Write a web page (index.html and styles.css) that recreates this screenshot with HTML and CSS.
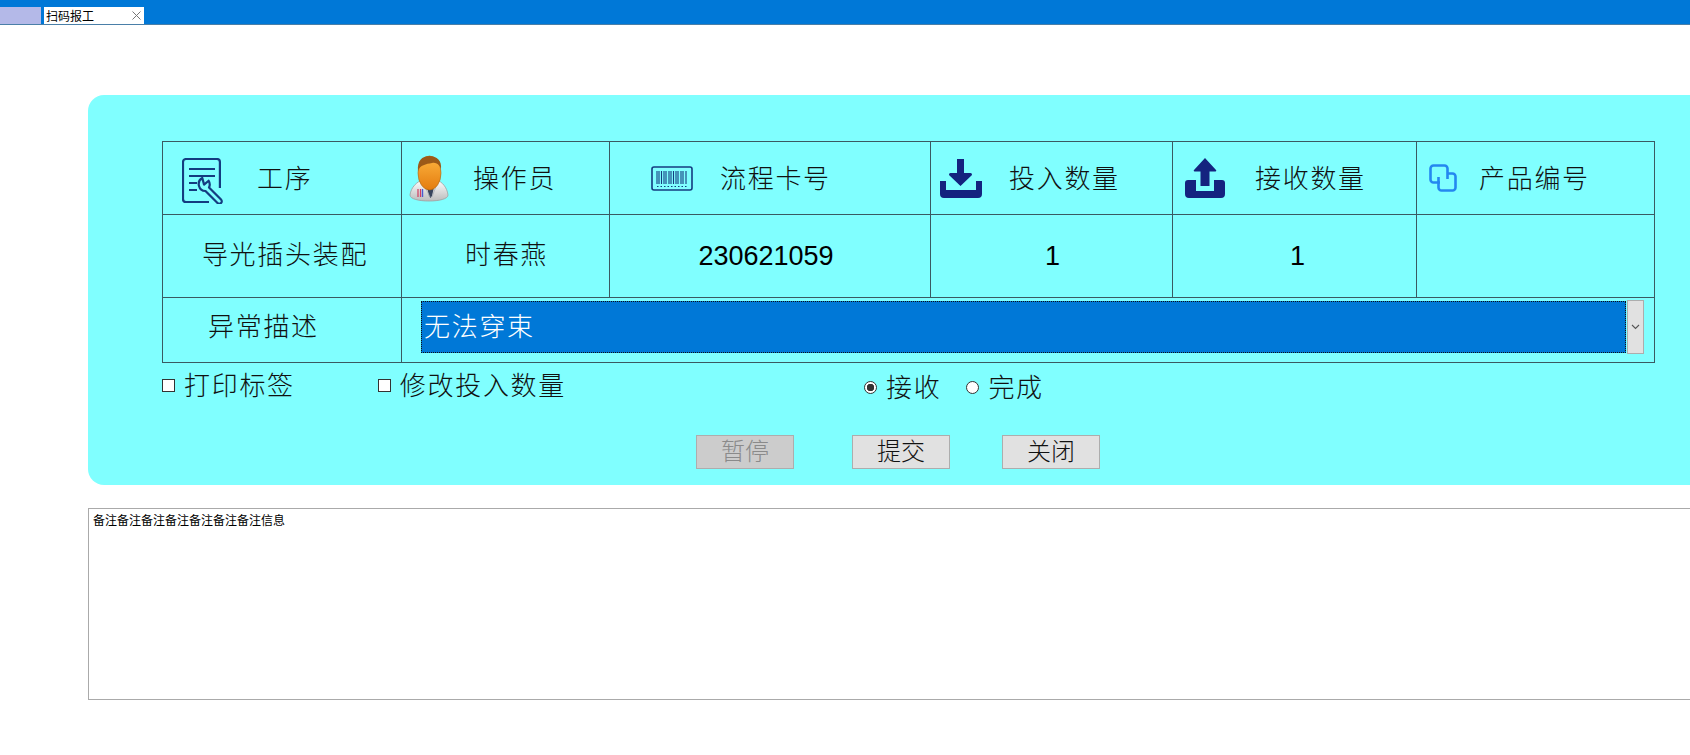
FILE: index.html

```html
<!DOCTYPE html>
<html lang="zh-CN">
<head>
    <meta charset="UTF-8">
    <meta name="viewport" content="width=device-width, initial-scale=1.0">
    <title>扫码报工</title>
    <link rel="stylesheet" href="styles.css">
</head>
<body>
    <div class="tab-bar">
        <div class="tab-home"></div>
        <div class="tab-active">
            <span>扫码报工</span>
            <svg class="tab-close" width="9" height="9" viewBox="0 0 9 9"><path d="M.5 .5l8 8M8.500 .5l-8 8" stroke="#777" stroke-width="1" fill="none"/></svg>
        </div>
    </div>

    <div class="panel">
        <table class="report-table">
            <colgroup>
                <col class="col-1"><col class="col-2"><col class="col-3"><col class="col-4"><col class="col-5"><col class="col-6">
            </colgroup>
            <tr class="row-head">
                <td>
                    <div class="head-cell head-step">
                        <svg class="icon-step" width="44" height="46" viewBox="0 0 44 46">
                            <path d="M37.900 30V4a3 3 0 0 0-3-3H4a3 3 0 0 0-3 3v37a3 3 0 0 0 3 3h23" fill="none" stroke="#143c80" stroke-width="2.200"/>
                            <path d="M7 11h26M7 18h26M7 25h8M7 32h8" stroke="#143c80" stroke-width="2.200" fill="none"/>
                            <path transform="translate(21 27) rotate(-45)" d="M-2.500 6V23a2.500 2.500 0 0 0 5 0V6A7 7 0 0 0 7 1L1 .5 4.500-5.500A7 7 0 0 0-2.500 6z" fill="#80ffff" stroke="#143c80" stroke-width="2.200" stroke-linejoin="round"/>
                        </svg>
                        <span>工序</span>
                    </div>
                </td>
                <td>
                    <div class="head-cell head-operator">
                        <svg width="40" height="47" viewBox="0 0 40 47">
                            <defs>
                                <linearGradient id="face" x1="0" y1="0" x2="0" y2="1"><stop offset="0" stop-color="#fdb53f"/><stop offset="1" stop-color="#e47c10"/></linearGradient>
                                <linearGradient id="coat" x1="0" y1="0" x2="0" y2="1"><stop offset="0" stop-color="#ffffff"/><stop offset="1" stop-color="#bcbcbc"/></linearGradient>
                            </defs>
                            <path d="M1 40C2 32 8 27 13 25L20 36 28 25C33 27 38 32 39 40 39 44 30 46 20 46 10 46 1 44 1 40Z" fill="url(#coat)" stroke="#a0a0a0" stroke-width=".8"/>
                            <path d="M19 27h5l1 5-2 9-1.500 2-1.500-2-2-9z" fill="#37445c"/>
                            <path d="M13 26l8 16M29 26l-6 16" stroke="#aab0b8" stroke-width=".8" fill="none"/>
                            <path d="M9 34v8M11.500 34v8" stroke="#d03c60" stroke-width="1.200"/>
                            <path d="M13.500 34v8" stroke="#4a5ad0" stroke-width="1.400"/>
                            <ellipse cx="20.500" cy="18" rx="11.500" ry="17" fill="url(#face)" stroke="#a9630f" stroke-width=".6"/>
                            <path d="M9 16C8 6 13 1 20.500 1 28 1 33 6 32 14 30 9 27 7 23 8 17 9 11 10 9 16Z" fill="#9c5a18"/>
                        </svg>
                        <span>操作员</span>
                    </div>
                </td>
                <td>
                    <div class="head-cell head-card">
                        <svg width="42" height="25" viewBox="0 0 42 25">
                            <rect x="1" y="1" width="40" height="23" rx="2" fill="none" stroke="#143c80" stroke-width="1.600"/>
                            <path d="M6 5v13M8 5v13M10.500 5v13M13 5v13M15 5v13M18 5v13M20 5v13M22.500 5v13M25 5v13M27 5v13M30 5v13M32 5v13M35 5v13" stroke="#143c80" stroke-width="1.100" fill="none"/>
                            <path d="M6 20.500h30" stroke="#143c80" stroke-width="1" stroke-dasharray="1.500 2" fill="none"/>
                        </svg>
                        <span>流程卡号</span>
                    </div>
                </td>
                <td>
                    <div class="head-cell head-in">
                        <svg width="42" height="39" viewBox="0 0 42 39">
                            <path d="M17 0h7v14h6.500a1.500 1.500 0 0 1 1 2.600L20.500 27 9.500 16.600a1.500 1.500 0 0 1 1-2.600H17z" fill="#14237f"/>
                            <path d="M0 22h6v9h30v-9h6v13a4 4 0 0 1-4 4H4a4 4 0 0 1-4-4z" fill="#14237f"/>
                        </svg>
                        <span>投入数量</span>
                    </div>
                </td>
                <td>
                    <div class="head-cell head-out">
                        <svg width="40" height="40" viewBox="0 0 40 40">
                            <path d="M20 0l11 12a.8.8 0 0 1-.6 1.400H24.500V28h-9V13.400H9.600A.8.8 0 0 1 9 12z" fill="#14237f"/>
                            <path d="M0 25a3 3 0 0 1 3-3h8v11h18V22h8a3 3 0 0 1 3 3v11a4 4 0 0 1-4 4H4a4 4 0 0 1-4-4z" fill="#14237f"/>
                        </svg>
                        <span>接收数量</span>
                    </div>
                </td>
                <td>
                    <div class="head-cell head-product">
                        <svg width="28" height="28" viewBox="0 0 28 28">
                            <path d="M11 18.500H4.500a3 3 0 0 1-3-3v-11a3 3 0 0 1 3-3h11a3 3 0 0 1 3 3V15" fill="none" stroke="#2488f0" stroke-width="2.600"/>
                            <path d="M9.500 13v10.500a3 3 0 0 0 3 3h11a3 3 0 0 0 3-3v-11a3 3 0 0 0-3-3H18" fill="none" stroke="#2488f0" stroke-width="2.600"/>
                        </svg>
                        <span>产品编号</span>
                    </div>
                </td>
            </tr>
            <tr class="row-data">
                <td class="cn cn-step">导光插头装配</td>
                <td class="cn cn-name">时春燕</td>
                <td class="num num-card">230621059</td>
                <td class="num num-in">1</td>
                <td class="num num-out">1</td>
                <td></td>
            </tr>
            <tr class="row-error">
                <td class="error-label">异常描述</td>
                <td colspan="5">
                    <div class="select-wrap">
                        <select class="error-select">
                            <option>无法穿束</option>
                        </select>
                        <span class="select-arrow">
                            <svg width="9" height="6" viewBox="0 0 9 6"><path d="M1 1l3.500 3.500L8 1" stroke="#555" stroke-width="1.100" fill="none"/></svg>
                        </span>
                    </div>
                </td>
            </tr>
        </table>

        <div class="options">
            <label class="check check-print"><input type="checkbox"><span>打印标签</span></label>
            <label class="check check-edit"><input type="checkbox"><span>修改投入数量</span></label>
            <label class="radio radio-receive"><input type="radio" name="state" checked><span>接收</span></label>
            <label class="radio radio-done"><input type="radio" name="state"><span>完成</span></label>
        </div>

        <div class="actions">
            <button class="btn" disabled>暂停</button>
            <button class="btn btn-submit">提交</button>
            <button class="btn btn-close">关闭</button>
        </div>
    </div>

    <textarea class="notes">备注备注备注备注备注备注备注信息</textarea>
</body>
</html>
```

FILE: styles.css

```css
html, body {
    margin: 0;
    padding: 0;
    height: 755px;
    overflow: hidden;
    background-color: #fff;
}
body {
    font-family: "Noto Sans CJK SC", "Liberation Sans", sans-serif;
    color: #111;
}
.tab-bar {
    display: flex;
    align-items: flex-end;
    box-sizing: border-box;
    height: 25px;
    background-color: #0078d7;
    border-bottom: 1px solid #4a7fa8;
}
.tab-home {
    width: 41px;
    height: 17px;
    background-color: #b4b9e8;
}
.tab-active {
    display: flex;
    align-items: center;
    justify-content: space-between;
    width: 95px;
    height: 17px;
    margin-left: 3px;
    padding: 0 3px 0 2px;
    background-color: #fff;
    font-size: 12px;
    line-height: 17px;
    color: #000;
}
.panel {
    box-sizing: border-box;
    width: 1660px;
    height: 390px;
    margin: 70px 0 0 88px;
    padding: 46px 0 0 74px;
    background-color: #80ffff;
    border-radius: 16px;
}
.report-table {
    table-layout: fixed;
    width: 1492px;
    border-collapse: collapse;
    font-size: 26px;
    letter-spacing: 1.7px;
    font-weight: 300;
}
.report-table td {
    padding: 0;
    border: 1px solid #3a5a62;
}
.col-1 { width: 239px; }
.col-2 { width: 208px; }
.col-3 { width: 321px; }
.col-4 { width: 242px; }
.col-5 { width: 244px; }
.col-6 { width: 238px; }
.row-head { height: 73px; }
.row-data { height: 83px; }
.row-error { height: 65px; }
.head-cell {
    display: flex;
    align-items: center;
}
.head-cell span {
    white-space: nowrap;
    margin-bottom: 4px;
}
.icon-step { margin-top: 5px; }
.head-step { padding-left: 19px; gap: 31px; }
.head-operator { padding-left: 7px; gap: 24px; }
.head-card { padding-left: 41px; gap: 27px; }
.head-in { padding-left: 9px; gap: 27px; }
.head-out { padding-left: 12px; gap: 30px; }
.head-product { padding-left: 12px; gap: 22px; }
.report-table .cn {
    text-align: center;
    padding-bottom: 8px;
}
.report-table .cn-step { padding-left: 6px; }
.report-table .cn-name { padding-left: 2px; }
.num {
    text-align: center;
    font-family: "Liberation Sans", sans-serif;
    font-size: 27px;
    font-weight: 400;
    letter-spacing: 0;
    color: #000;
}
.report-table .num-card { padding-right: 8px; }
.report-table .num-in { padding-left: 2px; }
.report-table .num-out { padding-left: 6px; }
.report-table .error-label {
    padding-left: 45px;
    padding-bottom: 12px;
}
.select-wrap {
    display: flex;
    align-items: stretch;
    height: 54px;
    margin: 0 10px 7px 19px;
}
.error-select {
    flex: 1;
    appearance: none;
    -webkit-appearance: none;
    box-sizing: border-box;
    height: 52px;
    margin-top: 1px;
    padding: 0 0 4px 2px;
    border: 1px dotted #111;
    border-radius: 0;
    outline: none;
    background-color: #0078d7;
    color: #fff;
    font-family: inherit;
    font-size: 26px;
    font-weight: 300;
    letter-spacing: 1.7px;
}
.select-arrow {
    display: flex;
    align-items: center;
    justify-content: center;
    box-sizing: border-box;
    width: 17px;
    margin-left: 1px;
    background-color: #e1e1e1;
    border: 1px solid #adadad;
}
.options {
    display: flex;
    align-items: center;
    height: 46px;
    font-size: 26px;
    letter-spacing: 1.7px;
    font-weight: 300;
}
.options label {
    display: flex;
    align-items: center;
}
.options input {
    appearance: none;
    -webkit-appearance: none;
    box-sizing: border-box;
    width: 13px;
    height: 13px;
    margin: 0 9px 2px 0;
    background-color: #fff;
    border: 1px solid #333;
}
.check span { margin-bottom: 6px; }
.radio span { margin-bottom: 4px; }
.options input[type="radio"] {
    border-radius: 50%;
    margin: 0 9px 0 0;
}
.options input[type="radio"]:checked {
    background: radial-gradient(circle, #333 0, #333 3.5px, #fff 4px);
}
.check-edit { margin-left: 83px; }
.radio-receive { margin-left: 298px; padding-top: 3px; }
.radio-done { margin-left: 25px; padding-top: 3px; }
.actions {
    display: flex;
    margin: 26px 0 0 534px;
}
.btn {
    box-sizing: border-box;
    width: 98px;
    height: 34px;
    padding: 0 0 5px;
    background-color: #e1e1e1;
    border: 1px solid #adadad;
    border-radius: 0;
    font-family: inherit;
    font-size: 24px;
    font-weight: 300;
    line-height: 28px;
    color: #111;
}
.btn:disabled {
    background-color: #cccccc;
    color: #8a8a8a;
}
.btn-submit { margin-left: 58px; }
.btn-close { margin-left: 52px; }
.notes {
    display: block;
    box-sizing: border-box;
    width: 1660px;
    height: 192px;
    margin: 23px 0 0 88px;
    padding: 4px;
    border: 1px solid #aaa;
    border-radius: 0;
    outline: none;
    resize: none;
    overflow: hidden;
    font-family: inherit;
    font-size: 12px;
    line-height: 14px;
    color: #000;
}
```
